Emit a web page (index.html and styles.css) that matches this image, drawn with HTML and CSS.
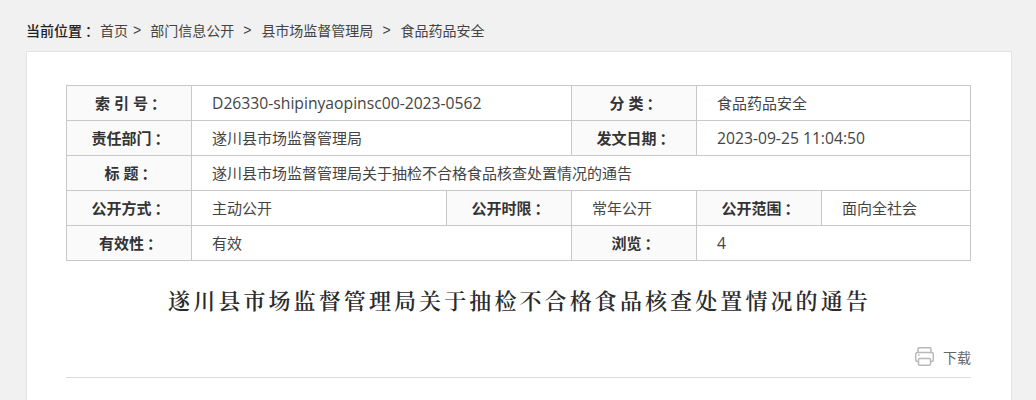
FILE: index.html
```html
<!DOCTYPE html>
<html lang="zh">
<head>
<meta charset="utf-8">
<title>遂川县市场监督管理局关于抽检不合格食品核查处置情况的通告</title>
<link rel="stylesheet" href="styles.css">
</head>
<body>
<nav class="crumbs"><b class="here">当前位置<span class="colon">：</span></b><span>首页</span><span class="sep1">&gt;</span><span>部门信息公开</span><span class="sep">&gt;</span><span>县市场监督管理局</span><span class="sep">&gt;</span><span>食品药品安全</span></nav>
<main class="card">
<table class="meta">
<colgroup><col class="w125"><col class="w255"><col class="w125"><col class="w125"><col class="w125"><col class="w149"></colgroup>
<tr><th>索 引 号<span class="colon">：</span></th><td colspan="2" class="latin">D26330-shipinyaopinsc00-2023-0562</td><th>分 类<span class="colon">：</span></th><td colspan="2">食品药品安全</td></tr>
<tr><th>责任部门<span class="colon">：</span></th><td colspan="2">遂川县市场监督管理局</td><th>发文日期<span class="colon">：</span></th><td colspan="2" class="latin">2023-09-25 11:04:50</td></tr>
<tr><th>标 题<span class="colon">：</span></th><td colspan="5">遂川县市场监督管理局关于抽检不合格食品核查处置情况的通告</td></tr>
<tr><th>公开方式<span class="colon">：</span></th><td>主动公开</td><th>公开时限<span class="colon">：</span></th><td>常年公开</td><th>公开范围<span class="colon">：</span></th><td>面向全社会</td></tr>
<tr><th>有效性<span class="colon">：</span></th><td colspan="2">有效</td><th>浏览<span class="colon">：</span></th><td colspan="2" class="latin">4</td></tr>
</table>
<h1 class="title">遂川县市场监督管理局关于抽检不合格食品核查处置情况的通告</h1>
<div class="tools">
<svg class="printer" width="19" height="19" viewBox="0 0 19 19" fill="none" stroke="#b8b8b8" stroke-width="1.5"><path d="M3 5.5V2a1.2 1.2 0 0 1 1.2-1.2h10.6A1.2 1.2 0 0 1 16 2v3.5"/><path d="M3.5 14.5H2.5a1.8 1.8 0 0 1-1.8-1.8V7.3a1.8 1.8 0 0 1 1.8-1.8h14a1.8 1.8 0 0 1 1.8 1.8v5.4a1.8 1.8 0 0 1-1.8 1.8h-1"/><rect x="3.5" y="11.5" width="12" height="6.7" rx="1"/><path d="M3 8h1.5"/></svg>
<span>下载</span>
</div>
</main>
</body>
</html>
```
FILE: styles.css
```css
html, body { margin: 0; padding: 0; }
body {
  height: 400px;
  overflow: hidden;
  background: #f1f1f1;
  font-family: "Open Sans", "Noto Sans CJK SC", sans-serif;
  font-size: 14px;
  color: #444;
}
.crumbs {
  display: flex;
  align-items: center;
  height: 51px;
  padding: 9px 0 0 26px;
  box-sizing: border-box;
  white-space: nowrap;
}
.here { font-weight: 500; color: #222; margin-right: 4px; }
.colon { font-family: "Noto Sans CJK TC", sans-serif; margin-left: 3px; margin-right: -3px; }
.sep1 { margin: 0 9px 0 5px; font-family: "Liberation Sans", sans-serif; }
.sep { margin: 0 10px 0 9px; font-family: "Liberation Sans", sans-serif; }
.card {
  width: 986px;
  height: 349px;
  margin-left: 26px;
  box-sizing: border-box;
  background: #fff;
  border: 1px solid #e3e3e3;
  border-bottom: 0;
  padding: 33px 39px 0;
}
.meta {
  width: 905px;
  table-layout: fixed;
  border-collapse: collapse;
  font-size: 15px;
}
.w125 { width: 125px; }
.w255 { width: 255px; }
.w149 { width: 149px; }
.meta th, .meta td {
  padding: 0 0 2px;
  border: 1px solid #c8c8c8;
  box-sizing: border-box;
}
.meta tr { height: 35px; }
.meta th {
  background: #fafafa;
  font-weight: 700;
  color: #333;
  text-align: center;
}
.meta td { padding-left: 20px; color: #444; }
.meta td.latin { font-size: 15.7px; padding-bottom: 0; }
.title {
  margin: 23px 0 0;
  padding-left: 1px;
  font-family: "Noto Serif CJK SC", "Noto Sans CJK SC", serif;
  font-size: 22px;
  line-height: 32px;
  font-weight: 600;
  letter-spacing: 3.1px;
  color: #2b2b2b;
  text-align: center;
}
.tools {
  display: flex;
  justify-content: flex-end;
  align-items: center;
  gap: 9px;
  width: 905px;
  height: 45px;
  margin-top: 17px;
  box-sizing: border-box;
  padding-top: 3px;
  border-bottom: 1px solid #dcdcdc;
  color: #666;
}
```
